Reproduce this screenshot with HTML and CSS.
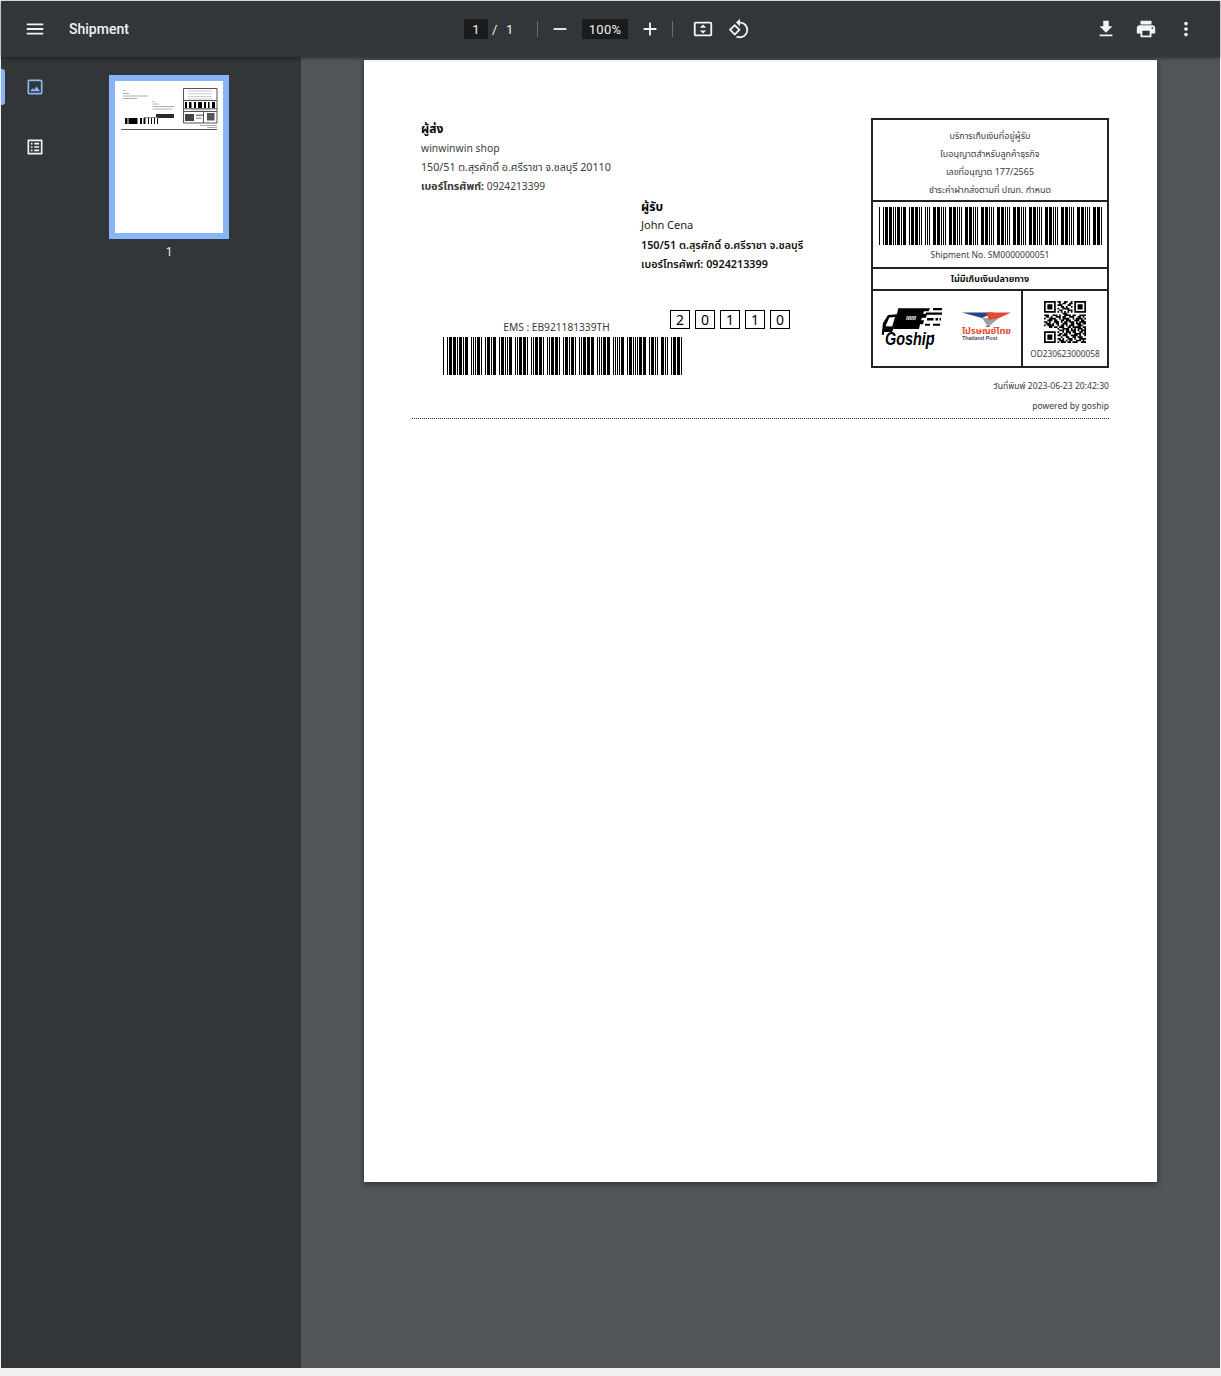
FILE: index.html
```html
<!DOCTYPE html>
<html lang="th">
<head>
<meta charset="utf-8">
<title>Shipment</title>
<link rel="stylesheet" href="styles.css">
</head>
<body>
<div class="viewer">
  <header class="toolbar">
    <div class="tb-left">
      <button class="icon-btn menu-btn"><svg class="ic" viewBox="0 0 24 24"><path d="M3 18h18v-2H3v2zm0-5h18v-2H3v2zm0-7v2h18V6H3z"/></svg></button>
      <span class="title">Shipment</span>
    </div>
    <div class="tb-center">
      <span class="field page-field">1</span>
      <span class="slash">/</span>
      <span class="total">1</span>
      <span class="sep sep-a"></span>
      <button class="icon-btn zoom-out"><svg class="ic" viewBox="0 0 24 24"><path d="M5 11h14v2H5z"/></svg></button>
      <span class="field zoom-field">100%</span>
      <button class="icon-btn zoom-in"><svg class="ic" viewBox="0 0 24 24"><path d="M19 13h-6v6h-2v-6H5v-2h6V5h2v6h6z"/></svg></button>
      <span class="sep sep-b"></span>
      <button class="icon-btn fit"><svg class="ic" viewBox="0 0 24 24"><path d="M20 4H4c-1.100 0-2 .900-2 2v12c0 1.100.900 2 2 2h16c1.100 0 2-.900 2-2V6c0-1.100-.900-2-2-2zm0 14H4V6h16v12z"/><path d="M12 7l3.500 3.500h-7zM12 17l-3.500-3.500h7z"/></svg></button>
      <button class="icon-btn rotate"><svg class="ic" viewBox="0 0 24 24"><path d="M7.340 6.410L.860 12.900l6.490 6.480 6.490-6.480-6.500-6.490zM3.690 12.900l3.660-3.660L11 12.900l-3.660 3.660-3.650-3.660zm15.670-6.260C17.610 4.880 15.300 4 13 4V.760L8.760 5 13 9.240V6c1.790 0 3.580.680 4.950 2.050 2.730 2.730 2.730 7.170 0 9.900C16.580 19.320 14.790 20 13 20c-.970 0-1.940-.210-2.840-.610l-1.490 1.490C10.020 21.620 11.510 22 13 22c2.300 0 4.610-.880 6.360-2.640 3.520-3.510 3.520-9.210 0-12.720z"/></svg></button>
    </div>
    <div class="tb-right">
      <button class="icon-btn"><svg class="ic" viewBox="0 0 24 24"><path d="M19 9h-4V3H9v6H5l7 7 7-7zM5 18v2h14v-2H5z"/></svg></button>
      <button class="icon-btn"><svg class="ic" viewBox="0 0 24 24"><path d="M19 8H5c-1.660 0-3 1.340-3 3v6h4v4h12v-4h4v-6c0-1.660-1.340-3-3-3zm-3 11H8v-5h8v5zm3-7c-.550 0-1-.450-1-1s.450-1 1-1 1 .450 1 1-.450 1-1 1zm-1-9H6v4h12V3z"/></svg></button>
      <button class="icon-btn"><svg class="ic" viewBox="0 0 24 24"><path d="M12 8c1.100 0 2-.900 2-2s-.900-2-2-2-2 .900-2 2 .900 2 2 2zm0 2c-1.100 0-2 .900-2 2s.900 2 2 2 2-.900 2-2-.900-2-2-2zm0 6c-1.100 0-2 .900-2 2s.900 2 2 2 2-.900 2-2-.900-2-2-2z"/></svg></button>
    </div>
  </header>

  <div class="body-row">
    <aside class="sidebar">
      <nav class="rail">
        <button class="rail-btn active"><svg class="rail-ic" viewBox="0 0 24 24"><path d="M19 3H5c-1.100 0-2 .900-2 2v14c0 1.100.900 2 2 2h14c1.100 0 2-.900 2-2V5c0-1.100-.900-2-2-2zm0 16H5V5h14v14z"/><path d="M6 17l3-3.500 1.800 1.800L14 11.500l4 5.500z"/></svg></button>
        <button class="rail-btn"><svg class="rail-ic" viewBox="0 0 24 24"><path d="M19 5v14H5V5h14m1.100-2H3.900c-.500 0-.900.400-.900.900v16.200c0 .400.400.900.900.900h16.200c.400 0 .900-.500.900-.900V3.900c0-.500-.500-.900-.900-.900zM11 7h6v2h-6V7zm0 4h6v2h-6v-2zm0 4h6v2h-6zM7 7h2v2H7zm0 4h2v2H7zm0 4h2v2H7z"/></svg></button>
      </nav>
      <div class="thumbs">
        <div class="thumb">
          <svg class="thumb-page" viewBox="0 0 108 152">
            <rect width="108" height="152" fill="#fff"/>
            <path d="M8 9.500h2M8 12.500h6M8 15h25M8 17.500h14M37.500 20.500h2M37.500 23h6M37.500 25.500h22M37.500 28h20M85 44.500h17M92 46.500h10" stroke="#888" stroke-width=".7" fill="none"/>
            <path d="M73 10h24M73 12.800h24M73 15.600h24M73 18h24M75 28h20M76 29h20" stroke="#bbb" stroke-width=".8" fill="none"/>
            <path d="M68.500 7.500h33.500v34.500h-33.500zM68.500 19.500h33.500M68.500 27.800h33.500M68.500 30.500h33.500M88.500 30.500v11.500" stroke="#555" stroke-width="1" fill="none"/>
            <path d="M70 21h2v6h-2zM74 21h2.500v6H74zM79 21h2v6h-2zM83 21h4v6h-4zM89 21h2v6h-2zM93 21h1.500v6H93zM97 21h3v6h-3z"/>
            <path d="M70 33h9v7h-9z" fill="#444"/>
            <path d="M81 33.500h7v1.500h-7z" fill="#7d7f9b"/>
            <path d="M81 36.500h6v1.500h-6z" fill="#c9a2a2"/>
            <path d="M92 32h7.500v7.500H92z" fill="#555"/>
            <path d="M10 37h2.500v6H10zM13.500 37h9v6h-9zM25 37h2v6h-2zM28.500 37h2v6h-2zM33 37h1v6h-1zM36 37h1v6h-1zM39 37h1v6h-1zM42 37h1v6h-1z"/>
            <path d="M41 33h18v4H41z" fill="#2a2a2a"/>
            <path d="M29 36h14v1H29z" fill="#888"/>
            <path d="M6 48.500h96" stroke="#555" stroke-width="1" fill="none"/>
          </svg>
        </div>
        <span class="thumb-num">1</span>
      </div>
    </aside>

    <main class="stage">
      <article class="page">
        <div class="label">
          <div class="addr-col">
            <section class="sender">
              <h4 class="addr-head">ผู้ส่ง</h4>
              <p class="line shop">winwinwin shop</p>
              <p class="line">150/51 ต.สุรศักดิ์ อ.ศรีราชา จ.ชลบุรี 20110</p>
              <p class="line"><b>เบอร์โทรศัพท์:</b> <span class="num">0924213399</span></p>
            </section>
            <section class="receiver">
              <h4 class="addr-head">ผู้รับ</h4>
              <p class="line name">John Cena</p>
              <p class="line dark">150/51 ต.สุรศักดิ์ อ.ศรีราชา จ.ชลบุรี</p>
              <p class="line dark">เบอร์โทรศัพท์: 0924213399</p>
            </section>
            <div class="ems">
              <span class="ems-no">EMS : EB921181339TH</span>
              <div class="zip">
                <span class="zip-box">2</span>
                <span class="zip-box">0</span>
                <span class="zip-box">1</span>
                <span class="zip-box">1</span>
                <span class="zip-box">0</span>
              </div>
              <svg class="ems-bar" width="239" height="38" viewBox="0 0 239 38">
                <line x1="0" y1="19" x2="239" y2="19" stroke="#000" stroke-width="38" stroke-dasharray="1 3 1 1 3 1 3 1 1 1 3 1 1 1 3 3 1 1 1 1 1 1 3 1 1 3 1 1 3 1 1 1 3 3 1 1 3 1 1 1 1 1 3 3 1 1 1 1 3 1 3 1 1 3 1 1 1 1 3 1 3 1 1 3 1 1 1 1 3 1 3 1 1 3 1 1 3 1 1 1 3 1 1 3 1 1 1 1 3 1 3 1 3 3 1 1 1 1 1 1 3 1 3 3 1 1 1 1 1 1 1 1 3 3 1 1 3 1 1 1 1 1 1 1 3 1 3 3 1 1 3 1 1 1 1 3 3 1 1 1 1 3 1 1 3 1 3 1 1"/>
              </svg>
            </div>
          </div>

          <div class="box">
            <div class="box-terms">
              <p>บริการเก็บเงินที่อยู่ผู้รับ</p>
              <p>ใบอนุญาตสำหรับลูกค้าธุรกิจ</p>
              <p>เลขที่อนุญาต 177/2565</p>
              <p>ชำระค่าฝากส่งตามที่ ปณท. กำหนด</p>
            </div>
            <div class="box-ship">
              <svg class="ship-bar" width="223" height="38" viewBox="0 0 223 38">
                <line x1="0" y1="19" x2="223" y2="19" stroke="#000" stroke-width="38" stroke-dasharray="1 3 1 1 3 1 3 1 1 1 1 1 3 1 1 1 3 3 1 1 3 1 3 1 1 1 1 3 1 1 1 1 1 3 3 1 3 1 1 1 1 1 1 3 3 1 3 1 1 1 1 1 1 3 3 1 3 1 1 1 1 1 1 3 3 1 3 1 1 1 1 1 1 3 3 1 3 1 1 1 1 1 1 3 3 1 3 1 1 1 1 1 1 3 3 1 3 1 1 1 1 1 1 3 3 1 3 1 1 1 1 1 1 3 3 1 3 1 1 1 1 1 1 3 3 1 3 1 1 1 1 1 1 3 3 1 3 1 1 1 3 1 1 3 3 1 1 1 1 1 3 1 1 3 1 1 1 1 3 1 1 3 1 1 3 1 3 1 1"/>
              </svg>
              <span class="ship-no">Shipment No. SM0000000051</span>
            </div>
            <div class="box-cod">ไม่มีเก็บเงินปลายทาง</div>
            <div class="box-logos">
              <div class="logos">
                <svg class="goship" width="62" height="46" viewBox="0 0 62 46">
                  <path d="M17.300 .3H49l-1.500 3H43l-1 2.500h4l-1 4h-4l-1 2.500h3l-1 4h-3l-1 4.800H12.300z"/>
                  <path fill-rule="evenodd" d="M7 7l9.500-.7-4.500 15.700-2 3.500-2 3-7.300-2L2 15zM8.300 9.500L14 9l-2.800 9.500-6.700-.2z"/>
                  <path d="M52 0h9v2.300h-9zM45 4.500h16v2.200H45zM46 10h6.500v2.500H46zM54.500 10H57v2.500h-2.500zM58.500 10H60v2.500h-1.500zM44 15.700h5v2h-5zM52 15.700h7v2h-7z"/>
                  <text class="goship-mini" x="25" y="12">IIIIII</text>
                  <rect x="3" y="24" width="48" height="17" fill="#fff"/>
                  <text class="goship-word" transform="translate(4 37) scale(.8 1)">Goship</text>
                  <circle cx="52.500" cy="27.500" r="1"/>
                </svg>
                <svg class="tpost" width="50" height="30" viewBox="0 0 50 30">
                  <path d="M0 .5h32L20 6z" fill="#27467f"/>
                  <path d="M20 6L26 15 37 6z" fill="#9aa0aa"/>
                  <path d="M24 .5h25L37 6l-10 2z" fill="#e2492f"/>
                  <text class="tpost-th" x="0" y="21.500">ไปรษณีย์ไทย</text>
                  <text class="tpost-en" x="0" y="27.500">Thailand Post</text>
                </svg>
              </div>
              <div class="qr-cell">
                <svg class="qr" width="42" height="42" viewBox="0 0 25 25">
                  <path fill-rule="evenodd" d="M0 0h7v7H0zM1 1v5h5V1zM2 2h3v3H2zM18 0h7v7h-7zM19 1v5h5V1zM20 2h3v3h-3zM0 18h7v7H0zM1 19v5h5v-5zM2 20h3v3H2z"/>
                  <path d="M8 .5h2M12 .5h2M16 .500h1M9 1.500h1M11 1.500h2M15 1.500h2M8 2.500h3M14 2.500h2M10 3.500h2M13 3.500h1M16 3.500h1M8 4.500h1M11 4.500h4M9 5.500h2M14 5.500h3M8 6.500h1M10 6.500h1M12 6.500h1M14 6.500h1M16 6.500h1M11 7.500h3M0 8.500h3M5 8.500h3M9 8.500h1M12 8.500h4M17 8.500h2M21 8.500h4M1 9.500h2M4 9.500h1M7 9.500h3M11 9.500h2M15 9.500h3M20 9.500h2M23 9.500h1M0 10.500h1M3 10.500h4M9 10.500h1M11 10.500h4M17 10.500h1M19 10.500h4M24 10.500h1M2 11.500h3M6 11.500h2M10 11.500h2M13 11.500h3M18 11.500h3M22 11.500h2M0 12.500h2M3 12.500h1M6 12.500h3M10 12.500h1M12 12.500h2M15 12.500h3M19 12.500h1M21 12.500h4M1 13.500h3M5 13.500h1M7 13.500h2M11 13.500h3M16 13.500h2M19 13.500h3M23 13.500h2M0 14.500h1M2 14.500h4M8 14.500h1M10 14.500h2M13 14.500h1M15 14.500h3M20 14.500h3M3 15.500h2M6 15.500h2M9 15.500h3M14 15.500h2M17 15.500h5M23 15.500h2M8 16.500h1M11 16.500h4M16 16.500h1M18 16.500h1M20 16.500h3M24 16.500h1M9 17.500h3M13 17.500h2M16 17.500h3M20 17.500h1M22 17.500h3M8 18.500h1M11 18.500h1M13 18.500h3M17 18.500h2M21 18.500h2M24 18.500h1M9 19.500h2M12 19.500h2M15 19.500h1M18 19.500h4M23 19.500h2M8 20.500h2M11 20.500h3M16 20.500h4M21 20.500h1M24 20.500h1M10 21.500h1M13 21.500h2M17 21.500h2M20 21.500h3M8 22.500h2M11 22.500h1M14 22.500h3M18 22.500h1M21 22.500h4M9 23.500h3M13 23.500h1M15 23.500h2M19 23.500h3M23 23.500h1M8 24.500h1M10 24.500h3M14 24.500h2M17 24.500h3M22 24.500h3" stroke="#000" stroke-width="1" fill="none"/>
                </svg>
                <span class="qr-no">OD230623000058</span>
              </div>
            </div>
          </div>
        </div>
        <p class="printed">วันที่พิมพ์ 2023-06-23 20:42:30</p>
        <p class="powered">powered by goship</p>
        <div class="dotted"></div>
      </article>
    </main>
  </div>
</div>
</body>
</html>
```

FILE: styles.css
```css
* { box-sizing: border-box; }
html, body { margin: 0; height: 100%; }
body {
  background: #f1f1f1;
  padding: 1px 1px 8px 1px;
  font-family: "Noto Sans", "Noto Sans CJK SC", sans-serif;
}
p, h4 { margin: 0; }
button { background: none; border: 0; padding: 0; margin: 0; }

.viewer {
  display: flex;
  flex-direction: column;
  height: 100%;
  background: #525659;
}

/* toolbar */
.toolbar {
  flex: 0 0 56px;
  display: flex;
  align-items: center;
  background: #323639;
  color: #f1f3f4;
  font-family: Roboto, sans-serif;
  box-shadow: 0 1px 4px rgba(0, 0, 0, .45);
  position: relative;
  z-index: 2;
}
.tb-left { flex: 0 0 463px; display: flex; align-items: center; padding-left: 14px; }
.title { margin-left: 14px; font-size: 14px; font-weight: 500; }
.icon-btn { width: 40px; height: 40px; display: flex; align-items: center; justify-content: center; flex: none; }
.ic { width: 22px; height: 22px; fill: #f1f3f4; display: block; }
.tb-center { display: flex; align-items: center; font-size: 13px; }
.field {
  height: 20px;
  background: #191b1c;
  display: flex;
  align-items: center;
  justify-content: center;
}
.page-field { width: 24px; }
.zoom-field { width: 46px; letter-spacing: .3px; }
.slash { margin-left: 4px; width: 5px; }
.total { margin-left: 9px; width: 7px; }
.sep { width: 1px; height: 16px; background: #6b6e71; }
.sep-a { margin-left: 24px; }
.zoom-out { margin: 0 2px 0 2px; }
.zoom-in { margin-left: 2px; }
.sep-b { margin-left: 2px; }
.fit { margin-left: 10px; }
.rotate { margin-left: -4px; }
.tb-right { margin-left: auto; padding-right: 14px; display: flex; }

/* body */
.body-row { flex: 1; display: flex; min-height: 0; }
.sidebar {
  flex: 0 0 300px;
  background: #323639;
  display: flex;
}
.rail { flex: 0 0 68px; padding-top: 12px; display: flex; flex-direction: column; gap: 24px; }
.rail-btn {
  height: 36px;
  display: flex;
  align-items: center;
  padding-left: 24px;
  position: relative;
}
.rail-btn.active::before {
  content: "";
  position: absolute;
  left: 0;
  top: 0;
  width: 4px;
  height: 36px;
  background: #8ab4f8;
  border-radius: 0 3px 3px 0;
}
.rail-ic { width: 20px; height: 20px; fill: #f1f3f4; display: block; }
.rail-btn.active .rail-ic { fill: #8ab4f8; }
.thumbs {
  margin-left: 40px;
  padding-top: 18px;
  width: 120px;
  display: flex;
  flex-direction: column;
  align-items: center;
}
.thumb { border: 6px solid #8ab4f8; display: flex; }
.thumb-page { width: 108px; height: 152px; display: block; }
.thumb-num {
  margin-top: 6px;
  font-family: Roboto, sans-serif;
  font-size: 12px;
  line-height: 14px;
  color: #e8eaed;
}

.stage { flex: 1; padding: 3px 0 0 63px; min-width: 0; overflow: hidden; }
.page {
  width: 793px;
  height: 1122px;
  background: #fff;
  padding: 58px 48px 0;
  box-shadow: 0 2px 6px rgba(0, 0, 0, .45);
  font-family: "Noto Sans", "Noto Sans Thai", "DejaVu Sans", sans-serif;
  font-size: 10.700px;
  color: #3a3a3a;
}

.label { display: flex; justify-content: space-between; }
.addr-col { width: 400px; }
.sender { padding: 1px 0 0 9px; }
.receiver { margin: 1px 0 0 229px; }
.addr-head { font-size: 12px; line-height: 20px; color: #000; font-weight: 700; }
.line { line-height: 19px; white-space: nowrap; }
.shop { font-size: 10.400px; }
.num { font-size: 10.200px; }
.name { font-size: 11px; color: #222; margin: -2px 0 1px; }
.dark { color: #111; font-size: 10.800px; font-weight: 600; }
.ems {
  display: grid;
  grid-template-columns: 31px 227px 12px 1fr;
  margin-top: 37px;
}
.ems-no { grid-column: 2; grid-row: 1; align-self: end; text-align: center; font-size: 10.200px; line-height: 13px; margin-bottom: 3px; }
.zip { grid-column: 3 / 5; grid-row: 1; display: flex; gap: 5px; margin-bottom: 8px; width: 120px; }
.zip-box {
  flex: 0 0 20px;
  height: 19px;
  border: 1px solid #000;
  color: #000;
  font-size: 14px;
  line-height: 17px;
  text-align: center;
}
.ems-bar { grid-column: 2 / 4; grid-row: 2; display: block; shape-rendering: crispEdges; }

/* right box */
.box {
  width: 238px;
  height: 250px;
  border: 2px solid #222;
  display: flex;
  flex-direction: column;
}
.box-terms {
  flex: 0 0 82px;
  padding-top: 7px;
  text-align: center;
  font-size: 9px;
  line-height: 18px;
  border-bottom: 2px solid #222;
}
.box-ship {
  flex: 0 0 67px;
  padding-top: 5px;
  display: flex;
  flex-direction: column;
  align-items: center;
  border-bottom: 2px solid #222;
  font-size: 8.600px;
}
.ship-bar { display: block; shape-rendering: crispEdges; }
.ship-no { margin-top: 3px; line-height: 14px; }
.box-cod {
  flex: 0 0 20px;
  text-align: center;
  font-size: 9px;
  line-height: 20px;
  font-weight: 700;
  color: #111;
  border-bottom: 2px solid #222;
}
.box-logos { flex: 1; display: flex; }
.logos {
  flex: 0 0 150px;
  display: flex;
  align-items: flex-start;
  padding: 17px 0 0 8px;
  gap: 19px;
  border-right: 2px solid #222;
}
.tpost { margin-top: 4px; }
.goship-word { font: italic 700 18px "Liberation Sans", sans-serif; }
.goship-mini { font: italic 700 6px "Liberation Sans", sans-serif; fill: #fff; }
.tpost-th { font-size: 9.200px; font-weight: 700; fill: #e2492f; }
.tpost-en { font: 700 5.400px "Liberation Sans", sans-serif; fill: #3d4b66; }
.qr-cell { flex: 1; display: flex; flex-direction: column; align-items: center; padding-top: 10px; }
.qr { display: block; }
.qr-no { margin-top: 4px; font-size: 8.300px; line-height: 14px; }

.printed, .powered { text-align: right; font-size: 8.600px; line-height: 14px; }
.printed { margin-top: 4px; }
.powered { margin-top: 6px; }
.dotted { margin-top: 5px; border-top: 1px dotted #333; }
```
